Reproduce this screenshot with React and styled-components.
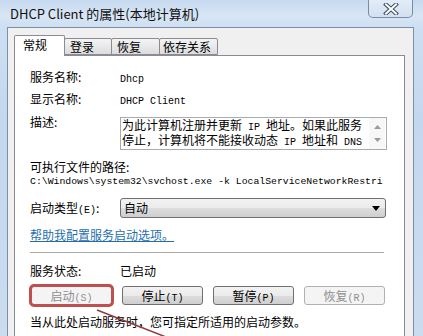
import React from 'react';
import styled, { createGlobalStyle } from 'styled-components';

const Global = createGlobalStyle`
  html, body { margin: 0; padding: 0; overflow: hidden; background: #fff; }
  body { font-family: "Noto Sans CJK SC", "Noto Sans", sans-serif; }
  * { box-sizing: border-box; }
`;

const Window = styled.div`
  position: relative;
  width: 423px;
  height: 336px;
  overflow: hidden;
  display: flex;
  flex-direction: column;
  background: linear-gradient(180deg, #c6d9ef 0px, #d8e6f5 16px, #cddff2 27px, #c3d7ee 120px, #cbdcf0 336px);
`;

const TitleBar = styled.div`
  height: 27px;
  flex: none;
  display: flex;
  align-items: flex-start;
  justify-content: space-between;
`;

const Title = styled.div`
  padding-left: 10px;
  font-size: 13px;
  line-height: 28px;
  color: #111;
  white-space: nowrap;
`;

const CloseBtn = styled.div`
  width: 45px;
  height: 18px;
  margin-right: 10px;
  border: 1px solid rgba(80, 100, 130, 0.7);
  border-top: none;
  border-radius: 0 0 5px 5px;
  background: linear-gradient(180deg, #e3ecf7, #d2e0f1);
  display: flex;
  align-items: center;
  justify-content: center;
`;

const Body = styled.div`
  flex: 1;
  display: flex;
  padding: 0 9px 0 7px;
  min-height: 0;
  min-width: 0;
`;

const Client = styled.div`
  flex: 1;
  min-width: 0;
  display: flex;
  flex-direction: column;
  background: #f0f0f0;
  border: 1px solid #7d8ea5;
  border-bottom: none;
  padding: 7px 8px 0 6px;
`;

const TabStrip = styled.div`
  height: 21px;
  flex: none;
  display: flex;
  align-items: flex-end;
  position: relative;
  z-index: 1;
`;

const Tab = styled.div`
  position: relative;
  width: ${(p) => p.$w}px;
  height: ${(p) => (p.$active ? 21 : 17)}px;
  margin-bottom: ${(p) => (p.$active ? 0 : 1)}px;
  margin-left: ${(p) => (p.$first ? 0 : -1)}px;
  z-index: ${(p) => (p.$active ? 2 : 1)};
  padding-left: ${(p) => p.$pl}px;
  padding-top: ${(p) => (p.$active ? 1 : 0)}px;
  border: 1px solid #898c95;
  border-bottom: ${(p) => (p.$active ? 'none' : '1px solid #898c95')};
  border-radius: 2px 2px 0 0;
  background: ${(p) =>
    p.$active ? '#ffffff' : 'linear-gradient(180deg, #f4f4f4 0%, #e9e9e9 50%, #dcdcdc 100%)'};
  font-size: 12px;
  line-height: ${(p) => (p.$active ? 16 : 15)}px;
  color: #000;
  white-space: nowrap;
`;

const Panel = styled.div`
  flex: 1;
  min-width: 0;
  margin-top: -1px;
  background: #fff;
  border: 1px solid #898c95;
  border-bottom: none;
  padding: 13px 16px 0 15px;
  display: flex;
  flex-direction: column;
  font-size: 12px;
  color: #000;
  overflow: hidden;
`;

const Row = styled.div`
  display: grid;
  grid-template-columns: 90px 1fr;
  align-items: ${(p) => p.$align || 'center'};
  margin-top: ${(p) => p.$mt || 0}px;
`;

const Label = styled.div`
  height: 16px;
  line-height: 16px;
  white-space: nowrap;
`;

const Value = styled.div`
  height: 16px;
  line-height: 16px;
  white-space: nowrap;
`;

const Mono = styled.span`
  font-family: "Liberation Mono", "DejaVu Sans Mono", monospace;
  font-size: 10px;
  line-height: 1;
  white-space: pre;
`;

const DescBox = styled.div`
  margin-top: 3px;
  width: 267px;
  height: 33px;
  border: 1px solid #a9abb2;
  display: flex;
  background: #fff;
`;

const DescText = styled.div`
  flex: 1;
  padding: 0 1px;
  line-height: 13px;
  white-space: nowrap;
`;

const ScrollBar = styled.div`
  width: 16px;
  margin-right: 1px;
  display: flex;
  flex-direction: column;
  align-items: center;
  justify-content: space-around;
  padding: 3px 0;
  background: #f7f7f7;
`;

const Block = styled.div`
  margin-top: ${(p) => p.$mt || 0}px;
  height: 16px;
  line-height: 16px;
  white-space: nowrap;
`;

const PathText = styled.div`
  font-family: "Liberation Mono", "DejaVu Sans Mono", monospace;
  font-size: 9.8px;
  height: 14px;
  line-height: 14px;
  white-space: nowrap;
  overflow: hidden;
`;

const Select = styled.div`
  width: 266px;
  height: 20px;
  border: 1px solid #707070;
  border-radius: 3px;
  background: linear-gradient(180deg, #f2f2f2 0%, #ebebeb 50%, #dddddd 51%, #cfcfcf 100%);
  display: flex;
  align-items: center;
  justify-content: space-between;
  padding: 0 5px 0 3px;
  line-height: 16px;
`;

const Link = styled.a`
  align-self: flex-start;
  margin-top: 9px;
  height: 16px;
  line-height: 16px;
  color: #1f6fae;
  text-decoration: underline;
  cursor: pointer;
  white-space: nowrap;
`;

const Separator = styled.div`
  margin-top: 9px;
  margin-right: 4px;
  height: 1px;
  flex: none;
  background: #a9a9a9;
`;

const ButtonRow = styled.div`
  margin-top: 7px;
  padding-left: 1px;
  display: flex;
  gap: 10px;
`;

const Button = styled.div`
  width: 81px;
  height: 19px;
  border: 1px solid ${(p) => (p.$disabled ? '#adb2b5' : '#707070')};
  border-radius: 3px;
  background: ${(p) =>
    p.$disabled
      ? '#f4f4f4'
      : 'linear-gradient(180deg, #f2f2f2 0%, #ebebeb 50%, #dddddd 51%, #cfcfcf 100%)'};
  color: ${(p) => (p.$disabled ? '#8f8f8f' : '#000')};
  text-align: center;
  line-height: 17px;
  font-size: 12px;
  white-space: nowrap;
  outline: ${(p) => (p.$highlight ? '3px solid #c24f4f' : 'none')};
  outline-offset: -1px;
`;

const Overlay = styled.svg`
  position: absolute;
  left: 0;
  top: 0;
  pointer-events: none;
`;

const tabs = [
  { label: '常规', w: 51, pl: 8, active: true },
  { label: '登录', w: 48, pl: 5 },
  { label: '恢复', w: 49, pl: 5 },
  { label: '依存关系', w: 59, pl: 3 },
];

export default function App() {
  return (
    <>
      <Global />
      <Window>
        <TitleBar>
          <Title>DHCP Client 的属性(本地计算机)</Title>
          <CloseBtn>
            <svg width="16" height="12" viewBox="0 0 16 12">
              <path d="M3 1.5 L13 10.5 M13 1.5 L3 10.5" stroke="#3b4b60" strokeWidth="4" strokeLinecap="square" />
              <path d="M3 1.5 L13 10.5 M13 1.5 L3 10.5" stroke="#ffffff" strokeWidth="2" strokeLinecap="square" />
            </svg>
          </CloseBtn>
        </TitleBar>
        <Body>
          <Client>
            <TabStrip>
              {tabs.map((t, i) => (
                <Tab key={t.label} $w={t.w} $pl={t.pl} $active={t.active} $first={i === 0}>
                  {t.label}
                </Tab>
              ))}
            </TabStrip>
            <Panel>
              <Row>
                <Label>服务名称:</Label>
                <Value><Mono>Dhcp</Mono></Value>
              </Row>
              <Row $mt={6}>
                <Label>显示名称:</Label>
                <Value><Mono>DHCP Client</Mono></Value>
              </Row>
              <Row $mt={7} $align="start">
                <Label>描述:</Label>
                <DescBox>
                  <DescText>
                    为此计算机注册并更新<Mono> IP </Mono>地址。如果此服务<br />
                    停止，计算机将不能接收动态<Mono> IP </Mono>地址和<Mono> DNS</Mono>
                  </DescText>
                  <ScrollBar>
                    <svg width="7" height="4" viewBox="0 0 7 4"><path d="M0 4 L3.5 0 L7 4 Z" fill="#9a9a9a" /></svg>
                    <svg width="7" height="4" viewBox="0 0 7 4"><path d="M0 0 L3.5 4 L7 0 Z" fill="#9a9a9a" /></svg>
                  </ScrollBar>
                </DescBox>
              </Row>
              <Block $mt={9}>可执行文件的路径:</Block>
              <PathText>C:\Windows\system32\svchost.exe -k LocalServiceNetworkRestri</PathText>
              <Row $mt={9}>
                <Label>启动类型<Mono>(E)</Mono>:</Label>
                <Select>
                  <span>自动</span>
                  <svg width="8" height="5" viewBox="0 0 8 5"><path d="M0 0 L8 0 L4 5 Z" fill="#000" /></svg>
                </Select>
              </Row>
              <Link>帮助我配置服务启动选项。</Link>
              <Separator />
              <Row $mt={10}>
                <Label>服务状态:</Label>
                <Value>已启动</Value>
              </Row>
              <ButtonRow>
                <Button $disabled $highlight>启动<Mono>(S)</Mono></Button>
                <Button>停止<Mono>(T)</Mono></Button>
                <Button>暂停<Mono>(P)</Mono></Button>
                <Button $disabled>恢复<Mono>(R)</Mono></Button>
              </ButtonRow>
              <Block $mt={9}>当从此处启动服务时，您可指定所适用的启动参数。</Block>
            </Panel>
          </Client>
        </Body>
        <Overlay width="423" height="336" viewBox="0 0 423 336">
          <line x1="97" y1="310" x2="166" y2="337" stroke="#8e3c3c" strokeWidth="1.5" />
        </Overlay>
      </Window>
    </>
  );
}
